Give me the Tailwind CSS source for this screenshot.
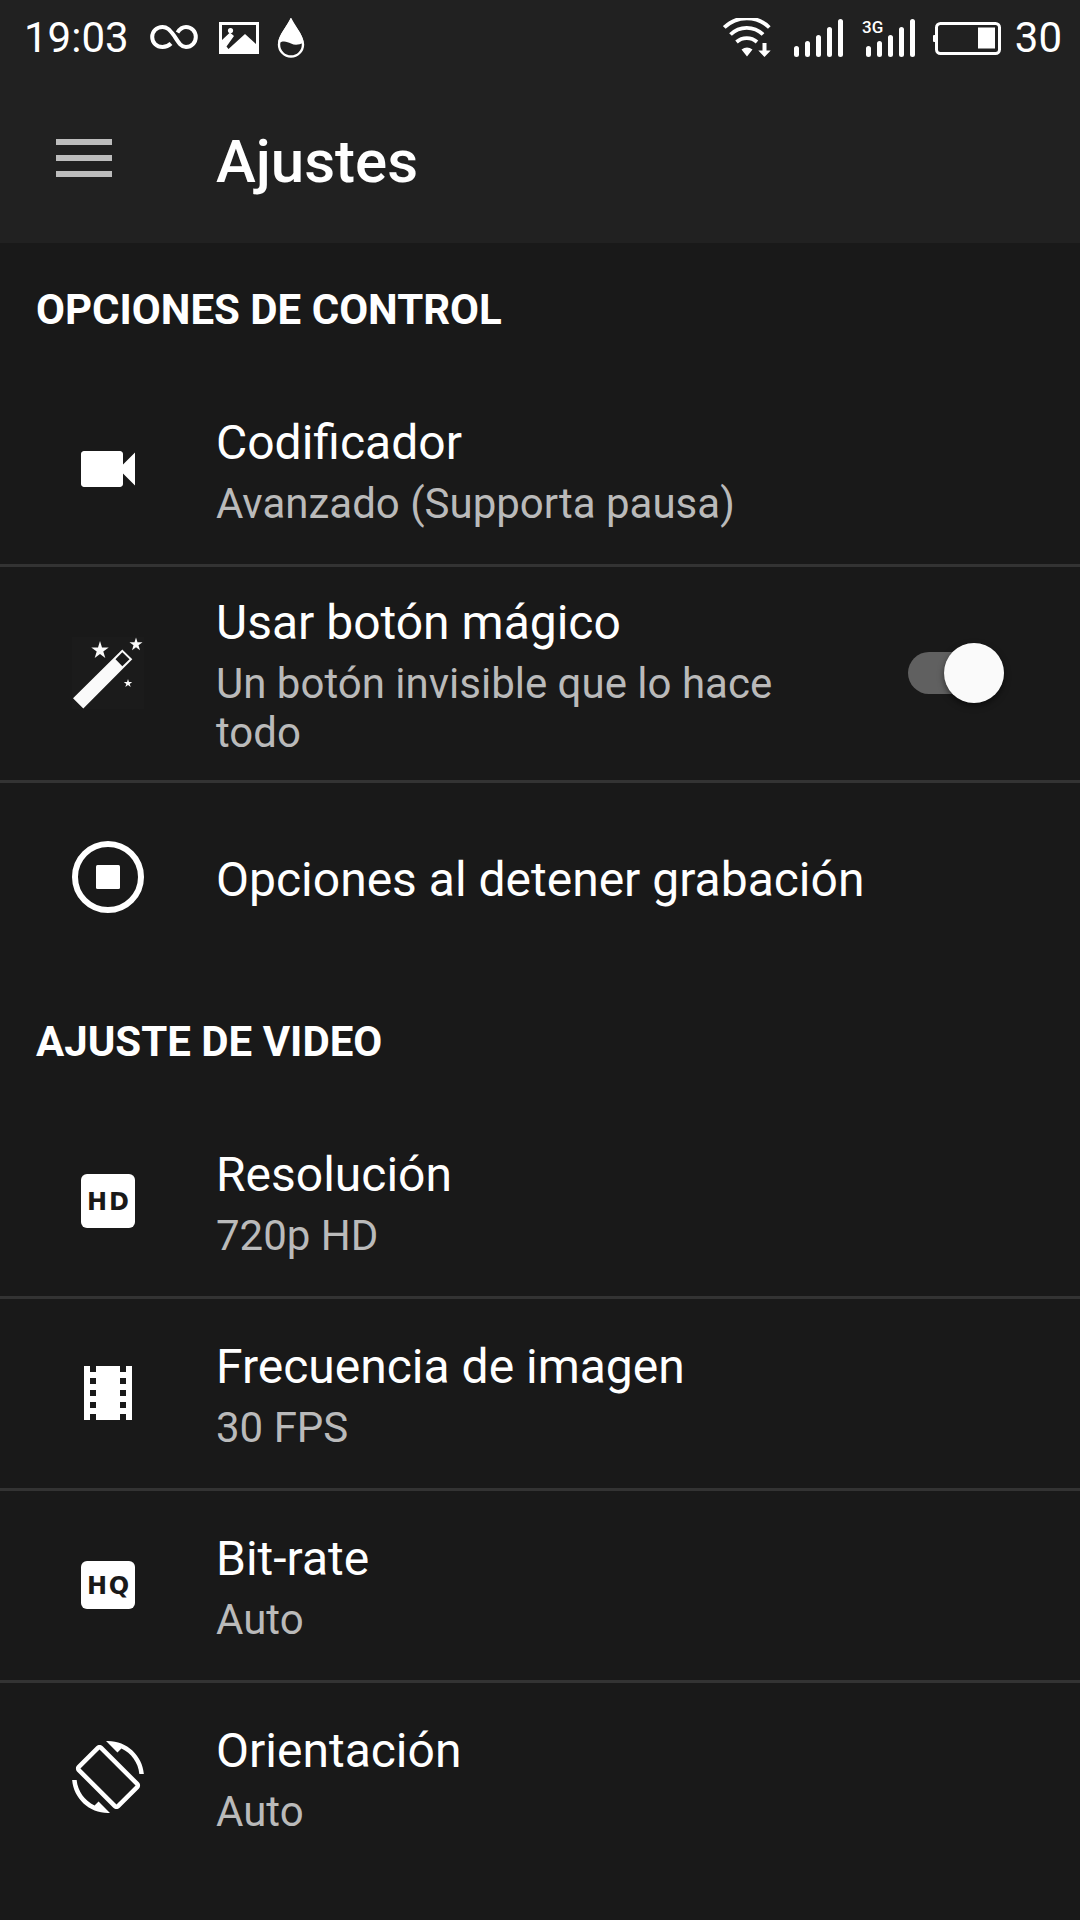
<!DOCTYPE html>
<html lang="es">
<head>
    <meta charset="UTF-8">
    <meta name="viewport" content="width=device-width, initial-scale=1.0">
    <title>Ajustes</title>
    <script src="https://cdn.jsdelivr.net/npm/@tailwindcss/browser@4"></script>
</head>
<body class="min-h-screen bg-[#191919] font-[Roboto,sans-serif] text-white">
    <header class="bg-[#212121]">
        <!-- Status bar -->
        <div class="flex h-[75px] items-center justify-between pl-6 pr-[18px] text-[42px]">
            <div class="flex items-center">
                <span>19:03</span>
                <svg class="ml-[21px] h-10 w-12" viewBox="0 0 48 40" fill="none" stroke="currentColor" stroke-width="4">
                    <path d="M21 25.500C18.500 28 16 29 12.500 29C6.500 29 2.200 24.500 2.200 19S6.500 9 12.500 9C17 9 19.500 11.500 24 17.500C28.500 24.500 31 29 36 29C41.500 29 45.800 24.500 45.800 19S41.500 9 36 9C32.500 9 30 10.500 27.500 14.500"/>
                </svg>
                <svg class="ml-[21px] h-10 w-10" viewBox="0 0 40 40" fill="currentColor">
                    <path fill-rule="evenodd" d="M0 4h40v32H0zM3 7v15l8-7.500 4 3.500L7.500 28.500l2 2.500L26 16l11 10V7z"/>
                    <circle cx="11.500" cy="12.500" r="2.600"/>
                </svg>
                <svg class="ml-[18px] h-10 w-7" viewBox="0 0 28 40" fill="currentColor">
                    <path d="M14 2C10 10 2 18 2 26.500a12 12 0 0 0 24 0C26 18 18 10 14 2z" fill="none" stroke="currentColor" stroke-width="2.400"/>
                    <path d="M13.700 0C10 9 1 17 1 25.500c5-3.500 9-2 13 0s8 1.500 12.500-1C26 16 17 8 13.700 0z"/>
                </svg>
            </div>
            <div class="flex items-center">
                <svg class="h-10 w-12" viewBox="0 0 48 40" fill="none" stroke="currentColor" stroke-width="3.800">
                    <path d="M1.300 9.500a32 32 0 0 1 45 0M7.500 16.500a23 23 0 0 1 32.500 0M13.500 24a15.500 15.500 0 0 1 20.500 0"/>
                    <path d="M24 38.500l-5.500-7a9 9 0 0 1 11 0zM39.500 25h4v7.500h4.200L41.500 39l-6.200-6.500h4.200z" fill="currentColor" stroke="none"/>
                </svg>
                <svg class="ml-[21px] h-10 w-[51px]" viewBox="0 0 51 40" stroke="currentColor" stroke-width="5" stroke-linecap="round">
                    <path d="M4.500 30.500v6M15.500 25.500v11M26.500 19.500v17M37.500 11.500v25M48.500 3.500v33"/>
                </svg>
                <svg class="ml-[18px] h-10 w-14" viewBox="0 0 56 40">
                    <text x="1" y="15" font-size="17" font-weight="500" fill="currentColor">3G</text>
                    <path d="M7.500 30.500v6M18.500 25.500v11M29.500 19.500v17M40.500 11.500v25M51.500 3.500v33" stroke="currentColor" stroke-width="5" stroke-linecap="round"/>
                </svg>
                <svg class="ml-4 h-10 w-[68px]" viewBox="0 0 68 40">
                    <rect x="3.500" y="5.500" width="63" height="30" rx="4" fill="none" stroke="currentColor" stroke-width="3"/>
                    <rect x="45" y="9.500" width="17" height="21" fill="currentColor"/>
                    <rect x="0" y="17" width="3" height="7" rx="1" fill="currentColor"/>
                </svg>
                <span class="ml-[14px]">30</span>
            </div>
        </div>
        <!-- App bar -->
        <div class="flex h-[168px] items-center pl-[54px]">
            <button type="button" aria-label="Menú" class="text-[#bdbdbd]">
                <svg class="h-[72px] w-[60px]" viewBox="0 0 60 72" fill="currentColor">
                    <path d="M2 16h56v6H2zM2 32h56v6H2zM2 48h56v6H2z"/>
                </svg>
            </button>
            <h1 class="ml-[102px] pt-[5px] text-[60px] leading-[70px] font-medium">Ajustes</h1>
        </div>
    </header>

    <main>
        <section>
            <h2 class="flex h-[132px] items-center px-9 text-[42px] leading-[49px] font-bold">OPCIONES DE CONTROL</h2>
            <button type="button" class="flex min-h-[192px] w-full items-center border-b-3 border-[#333] pl-[72px] pr-[76px] text-left">
                <svg class="mb-0.5 size-[72px] shrink-0" viewBox="0 0 24 24" fill="currentColor">
                    <path d="M17 10.500V7c0-.55-.45-1-1-1H4c-.55 0-1 .45-1 1v10c0 .55.45 1 1 1h12c.55 0 1-.45 1-1v-3.500l4 4v-11l-4 4z"/>
                </svg>
                <span class="ml-[72px] flex flex-1 flex-col gap-2 pt-[3px]">
                    <span class="text-[48px] leading-[56px]">Codificador</span>
                    <span class="text-[42px] leading-[49px] text-[#bababa]">Avanzado (Supporta pausa)</span>
                </span>
            </button>
            <label for="magicButton" class="flex min-h-[192px] w-full cursor-pointer items-center border-b-3 border-[#333] py-[23px] pl-[72px] pr-[76px]">
                <svg class="mb-0.5 size-[72px] shrink-0 bg-[#1b1b1b]" viewBox="0 0 72 72" fill="#fafafa">
                    <path fill-rule="evenodd" d="M1 61.300L50.300 12.500 60.300 22.300 11.300 71.500zM50.300 15.200L43.500 22.300 50.300 29.200 57.500 22.300z"/>
                    <path d="M28 4l2 6.500h6.700l-5.400 4 2 6.500-5.300-4-5.300 4 2-6.500-5.400-4H26z"/>
                    <path d="M64 .500l1.500 4.800h5l-4 3 1.500 4.900-4-3-4 3 1.500-4.900-4-3h5z"/>
                    <path d="M56 42l1 3h3.200l-2.500 1.900 1 3-2.700-1.900-2.700 1.900 1-3-2.500-1.900H55z"/>
                </svg>
                <span class="ml-[72px] flex flex-1 flex-col gap-2 pt-[5px]">
                    <span class="text-[48px] leading-[56px]">Usar botón mágico</span>
                    <span class="text-[42px] leading-[49px] text-[#bababa]">Un botón invisible que lo hace todo</span>
                </span>
                <input id="magicButton" type="checkbox" role="switch" checked
                    class="relative mb-0.5 ml-16 h-[42px] w-24 shrink-0 appearance-none rounded-full bg-[#606060] before:absolute before:-top-[9px] before:left-0 before:size-[60px] before:rounded-full before:bg-[#fafafa] before:shadow-[0_3px_6px_rgba(0,0,0,0.5)] checked:before:left-9">
            </label>
            <button type="button" class="flex min-h-[192px] w-full items-center border-b-3 border-transparent pl-[72px] pr-[76px] text-left">
                <svg class="mb-0.5 size-[72px] shrink-0" viewBox="0 0 24 24" fill="currentColor">
                    <circle cx="12" cy="12" r="11" fill="none" stroke="currentColor" stroke-width="2"/>
                    <rect x="8" y="8" width="8" height="8" rx=".5"/>
                </svg>
                <span class="ml-[72px] flex-1 pt-[5px] text-[48px] leading-[56px]">Opciones al detener grabación</span>
            </button>
        </section>

        <section>
            <h2 class="flex h-[132px] items-center px-9 text-[42px] leading-[49px] font-bold">AJUSTE DE VIDEO</h2>
            <button type="button" class="flex min-h-[192px] w-full items-center border-b-3 border-[#333] pl-[72px] pr-[76px] text-left">
                <svg class="mb-0.5 size-[72px] shrink-0" viewBox="0 0 72 72">
                    <rect x="9" y="9" width="54" height="54" rx="6" fill="currentColor"/>
                    <text x="25 47" y="45" text-anchor="middle" font-family="DejaVu Sans" font-size="24" font-weight="700" fill="#191919">HD</text>
                </svg>
                <span class="ml-[72px] flex flex-1 flex-col gap-2 pt-[3px]">
                    <span class="text-[48px] leading-[56px]">Resolución</span>
                    <span class="text-[42px] leading-[49px] text-[#bababa]">720p HD</span>
                </span>
            </button>
            <button type="button" class="flex min-h-[192px] w-full items-center border-b-3 border-[#333] pl-[72px] pr-[76px] text-left">
                <svg class="mb-0.5 size-[72px] shrink-0" viewBox="0 0 24 24" fill="currentColor">
                    <path d="M18 3v2h-2V3H8v2H6V3H4v18h2v-2h2v2h8v-2h2v2h2V3h-2zM8 17H6v-2h2v2zm0-4H6v-2h2v2zm0-4H6V7h2v2zm10 8h-2v-2h2v2zm0-4h-2v-2h2v2zm0-4h-2V7h2v2z"/>
                </svg>
                <span class="ml-[72px] flex flex-1 flex-col gap-2 pt-[3px]">
                    <span class="text-[48px] leading-[56px]">Frecuencia de imagen</span>
                    <span class="text-[42px] leading-[49px] text-[#bababa]">30 FPS</span>
                </span>
            </button>
            <button type="button" class="flex min-h-[192px] w-full items-center border-b-3 border-[#333] pl-[72px] pr-[76px] text-left">
                <svg class="mb-0.5 size-[72px] shrink-0" viewBox="0 0 72 72">
                    <rect x="9" y="12" width="54" height="48" rx="6" fill="currentColor"/>
                    <text x="25 47" y="45" text-anchor="middle" font-family="DejaVu Sans" font-size="24" font-weight="700" fill="#191919">HQ</text>
                </svg>
                <span class="ml-[72px] flex flex-1 flex-col gap-2 pt-[3px]">
                    <span class="text-[48px] leading-[56px]">Bit-rate</span>
                    <span class="text-[42px] leading-[49px] text-[#bababa]">Auto</span>
                </span>
            </button>
            <button type="button" class="flex min-h-[192px] w-full items-center border-b-3 border-transparent pl-[72px] pr-[76px] text-left">
                <svg class="mb-0.5 size-[72px] shrink-0" viewBox="0 0 24 24" fill="currentColor">
                    <path d="M16.480 2.520c3.270 1.550 5.610 4.720 5.970 8.480h1.500C23.440 4.840 18.290 0 12 0l-.66.03 3.810 3.810 1.330-1.320zm-6.250-.77c-.59-.59-1.540-.59-2.120 0L1.750 8.110c-.59.59-.59 1.540 0 2.120l12.020 12.020c.59.59 1.540.59 2.120 0l6.360-6.360c.59-.59.59-1.540 0-2.120L10.230 1.750zm4.600 19.440L2.810 9.170l6.360-6.360 12.020 12.020-6.360 6.360zm-7.310.29C4.250 19.940 1.910 16.760 1.550 13H.05C.56 19.160 5.710 24 12 24l.66-.03-3.810-3.810-1.330 1.320z"/>
                </svg>
                <span class="ml-[72px] flex flex-1 flex-col gap-2 pt-[3px]">
                    <span class="text-[48px] leading-[56px]">Orientación</span>
                    <span class="text-[42px] leading-[49px] text-[#bababa]">Auto</span>
                </span>
            </button>
        </section>
    </main>
</body>
</html>
